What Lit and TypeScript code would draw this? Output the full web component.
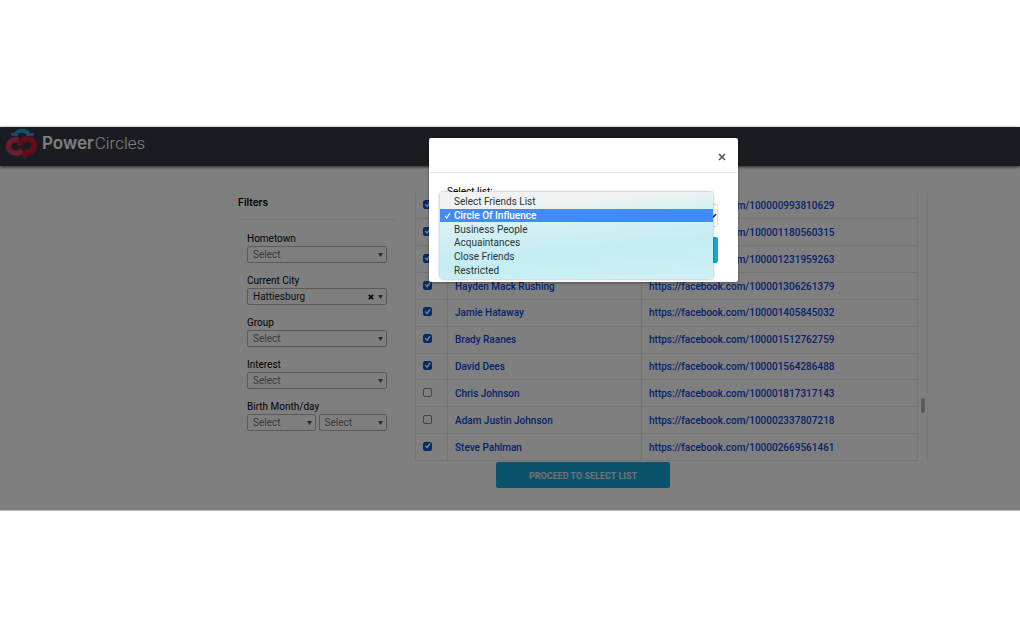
import { LitElement, html, css, svg, nothing } from "lit";
import { customElement, state } from "lit/decorators.js";

interface Friend {
  name: string;
  id: string;
  checked: boolean;
}

const FRIENDS: Friend[] = [
  { name: "", id: "100000993810629", checked: true },
  { name: "", id: "100001180560315", checked: true },
  { name: "", id: "100001231959263", checked: true },
  { name: "Hayden Mack Rushing", id: "100001306261379", checked: true },
  { name: "Jamie Hataway", id: "100001405845032", checked: true },
  { name: "Brady Raanes", id: "100001512762759", checked: true },
  { name: "David Dees", id: "100001564286488", checked: true },
  { name: "Chris Johnson", id: "100001817317143", checked: false },
  { name: "Adam Justin Johnson", id: "100002337807218", checked: false },
  { name: "Steve Pahlman", id: "100002669561461", checked: true },
];

const LISTS = [
  "Select Friends List",
  "Circle Of Influence",
  "Business People",
  "Acquaintances",
  "Close Friends",
  "Restricted",
];

@customElement("app-root")
export class AppRoot extends LitElement {
  @state() private picked = 1;

  static styles = css`
    :host {
      display: block;
      padding: 127px 0;
      background: #fff;
      color: #000;
      font: 10px/14px Roboto, "Liberation Sans", sans-serif;
    }
    * {
      box-sizing: border-box;
    }
    .stage {
      position: relative;
      background: #fff;
      padding-bottom: 22px;
      border-bottom: 1px solid #bbb;
    }
    .bar {
      display: flex;
      align-items: flex-start;
      gap: 4px;
      height: 39px;
      padding: 1px 6px;
      background: #323a42;
      box-shadow: 0 1px 3px #444;
    }
    .mark {
      width: 32px;
      height: 32px;
    }
    .brand {
      color: #fff;
      font: 300 17px/30px Roboto, "Liberation Sans", sans-serif;
      white-space: nowrap;
    }
    .brand b {
      font-family: Inter, "Liberation Sans", sans-serif;
      font-weight: 600;
      margin-right: 1px;
    }
    .body {
      display: flex;
      gap: 19px;
      padding: 27px 92px 0 238px;
    }
    .filters {
      width: 158px;
      flex: none;
    }
    h2 {
      margin: 2px 0 0;
      padding-bottom: 10px;
      font: 600 10px/14px Inter, "Liberation Sans", sans-serif;
      border-bottom: 1px solid #ececec;
    }
    .fields {
      display: grid;
      gap: 10px;
      padding: 11px 9px 0;
    }
    .field {
      display: grid;
      margin: 0;
      padding: 0;
      border: 0;
    }
    label,
    .legend {
      line-height: 15px;
    }
    .pair {
      display: grid;
      grid-template-columns: 1fr 1fr;
      gap: 3px;
    }
    .combo {
      display: grid;
      align-items: center;
    }
    .combo > * {
      grid-area: 1 / 1;
    }
    .combo svg {
      justify-self: end;
      pointer-events: none;
    }
    .arrow {
      width: 5px;
      height: 4px;
      margin-right: 4px;
    }
    .clear {
      width: 6px;
      height: 6px;
      margin-right: 13px;
    }
    select {
      appearance: none;
      width: 100%;
      height: 17px;
      margin: 0;
      padding: 0 5px;
      border: 1px solid #b4b4b4;
      border-radius: 2px;
      background: transparent;
      color: #777;
      font: inherit;
    }
    select.filled {
      color: #222;
    }
    .list {
      flex: 1;
      min-width: 0;
      display: flex;
    }
    table {
      flex: 1;
      height: 268px;
      border-collapse: collapse;
      table-layout: fixed;
    }
    td {
      padding: 1px 7px 0;
      border: 1px solid #e8e8e8;
      vertical-align: middle;
      white-space: nowrap;
    }
    tr:first-child td {
      border-top: 0;
    }
    .tick {
      width: 32px;
    }
    .name {
      width: 194px;
    }
    a {
      color: #0b46d8;
      font-weight: 500;
      text-decoration: none;
    }
    .box {
      appearance: none;
      display: grid;
      width: 9px;
      height: 9px;
      margin: 0 0 3px;
      border: 1px solid #888;
      border-radius: 2px;
    }
    .box:checked {
      background: #0c57d8;
      border-color: #0c57d8;
    }
    .box:checked::before {
      content: "";
      background: #fff;
      clip-path: polygon(10% 50%, 25% 38%, 42% 58%, 78% 8%, 95% 22%, 45% 88%);
    }
    .track {
      width: 10px;
      padding: 205px 2px 0 3px;
      border: solid #f0f0f0;
      border-width: 0 1px 0 0;
    }
    .thumb {
      height: 15px;
      border-radius: 3px;
      background: #b4b4b4;
    }
    .actions {
      display: flex;
      justify-content: center;
      padding: 1px 92px 0 238px;
    }
    .primary {
      height: 26px;
      border: 0;
      border-radius: 2px;
      background: #12a9d8;
      color: #fff;
      font: 700 9px/26px Roboto, "Liberation Sans", sans-serif;
      text-transform: uppercase;
    }
    .proceed {
      width: 174px;
      color: #e4e4e4;
    }
    .shade {
      position: absolute;
      inset: 0;
      display: flex;
      justify-content: center;
      align-items: flex-start;
      padding: 11px 91px 0 238px;
      background: rgba(0, 0, 0, 0.5);
    }
    .modal {
      position: relative;
      width: 309px;
      border-radius: 2px;
      background: #fff;
      box-shadow: 0 1px 3px rgba(0, 0, 0, 0.4);
    }
    .top {
      display: flex;
      justify-content: flex-end;
      padding: 10px 10px 7px;
      border-bottom: 1px solid #e8e8e8;
    }
    .close {
      display: grid;
      place-items: center;
      width: 12px;
      height: 17px;
      padding: 0;
      border: 0;
      background: none;
    }
    .close svg {
      width: 8px;
      height: 8px;
    }
    .form {
      display: grid;
      padding: 11px 20px 19px 18px;
    }
    .form select {
      height: 23px;
      margin-top: 5px;
      border-color: #ddd;
      color: #333;
    }
    .form .combo svg {
      width: 7px;
      height: 5px;
      margin: 5px 1px 0 0;
    }
    .form .primary {
      margin-top: 10px;
    }
    .menu {
      position: absolute;
      left: 11px;
      right: 25px;
      top: 54px;
      height: 87px;
      display: grid;
      grid-auto-rows: 1fr;
      margin: 0;
      padding: 3px 0 2px;
      list-style: none;
      border-radius: 3px;
      background: linear-gradient(175deg, #f0f2f2 18%, #d6f1f3 34%, #c3ecf3 65%, #d0f0f6);
      box-shadow: 0 0 3px rgba(0, 0, 0, 0.4);
      color: #2a3436;
    }
    .menu li {
      display: grid;
      grid-template-columns: 14px 1fr;
      align-items: center;
      line-height: 13px;
      cursor: default;
    }
    .menu .on {
      background: #418bf7;
      color: #fff;
      font-weight: 500;
    }
    .menu svg {
      width: 7px;
      height: 7px;
      margin-left: 4px;
    }
  `;

  private arrow() {
    return html`<svg class="arrow" viewBox="0 0 5 4" aria-hidden="true">
      ${svg`<path d="M0 0H5L2.5 4Z" fill="#555" />`}
    </svg>`;
  }

  private combo(id: string, value = "Select", label = "") {
    const filled = value !== "Select";
    return html`<div class="combo">
      <select id=${id} class=${filled ? "filled" : ""} aria-label=${label || nothing}>
        <option>${value}</option>
      </select>
      ${this.arrow()}
      ${filled
        ? html`<svg class="clear" viewBox="0 0 6 6" aria-hidden="true">
            ${svg`<path d="M.8.8 5.2 5.2M5.2.8.8 5.2" stroke="#111" stroke-width="1.7" />`}
          </svg>`
        : nothing}
    </div>`;
  }

  private field(id: string, label: string, value?: string) {
    return html`<div class="field">
      <label for=${id}>${label}</label>
      ${this.combo(id, value)}
    </div>`;
  }

  render() {
    return html`<div class="stage">
      <header class="bar">
        <svg class="mark" viewBox="0 0 96 96" fill="none" aria-hidden="true">
          <path d="M29 24C30 10 38 8 48 8S67 11 68 24" stroke="#269fd6" stroke-width="12" />
          <path d="M18 19H30M66 19H80" stroke="#269fd6" stroke-width="5" />
          <circle cx="20" cy="19" r="5" fill="#269fd6" />
          <circle cx="79" cy="19" r="5" fill="#269fd6" />
          <path d="M38 36C16 30 4 46 9 62C15 78 36 80 48 67" stroke="#dc3560" stroke-width="16" />
          <path d="M38 60C44 40 50 36 58 34C76 28 88 42 84 58C82 70 70 78 54 70" stroke="#c61a36" stroke-width="17" />
          <path d="M48 74H76L54 94Z" fill="#c61a36" />
          <path d="M32 56C46 62 50 46 66 52" stroke="#323a42" stroke-width="5" />
          <circle cx="31" cy="56" r="6" fill="#323a42" />
          <circle cx="67" cy="52" r="6" fill="#323a42" />
        </svg>
        <div class="brand"><b>Power</b>Circles</div>
      </header>

      <main class="body">
        <section class="filters">
          <h2>Filters</h2>
          <div class="fields">
            ${this.field("hometown", "Hometown")}
            ${this.field("city", "Current City", "Hattiesburg")}
            ${this.field("group", "Group")}
            ${this.field("interest", "Interest")}
            <div class="field" role="group" aria-labelledby="birth">
              <span class="legend" id="birth">Birth Month/day</span>
              <div class="pair">
                ${this.combo("month", "Select", "Birth month")}
                ${this.combo("day", "Select", "Birth day")}
              </div>
            </div>
          </div>
        </section>
        <section class="list">
          <table>
            <tbody>
              ${FRIENDS.map(
                (f) => html`<tr>
                  <td class="tick">
                    <input class="box" type="checkbox" aria-label=${f.name || f.id} .checked=${f.checked} />
                  </td>
                  <td class="name">${f.name ? html`<a href="#">${f.name}</a>` : nothing}</td>
                  <td><a href="#">https://facebook.com/${f.id}</a></td>
                </tr>`
              )}
            </tbody>
          </table>
          <div class="track"><div class="thumb"></div></div>
        </section>
      </main>
      <div class="actions">
        <button class="primary proceed">Proceed to select list</button>
      </div>

      <div class="shade">
        <div class="modal" role="dialog" aria-modal="true" aria-label="Select list">
          <div class="top">
            <button class="close" aria-label="Close">
              <svg viewBox="0 0 8 8"><path d="M1 1 7 7M7 1 1 7" stroke="#555" stroke-width="1.6" /></svg>
            </button>
          </div>
          <div class="form">
            <label for="list">Select list:</label>
            <div class="combo">
              <select id="list">
                ${LISTS.map((l, i) => html`<option ?selected=${i === this.picked}>${l}</option>`)}
              </select>
              <svg viewBox="0 0 7 5" aria-hidden="true">
                <path d="M1 1 3.5 4 6 1" fill="none" stroke="#222" stroke-width="1.4" />
              </svg>
            </div>
            <button class="primary" aria-label="Save"></button>
          </div>
          <ul class="menu" role="listbox" aria-label="Select list">
            ${LISTS.map(
              (l, i) => html`<li
                class=${i === this.picked ? "on" : ""}
                role="option"
                aria-selected=${i === this.picked}
                @click=${() => (this.picked = i)}
              >
                <span
                  >${i === this.picked
                    ? html`<svg viewBox="0 0 7 7"><path d="M1 4 2.7 6 6 1" fill="none" stroke="#fff" stroke-width="1.3" /></svg>`
                    : nothing}</span
                >
                <span>${l}</span>
              </li>`
            )}
          </ul>
        </div>
      </div>
    </div>`;
  }
}
